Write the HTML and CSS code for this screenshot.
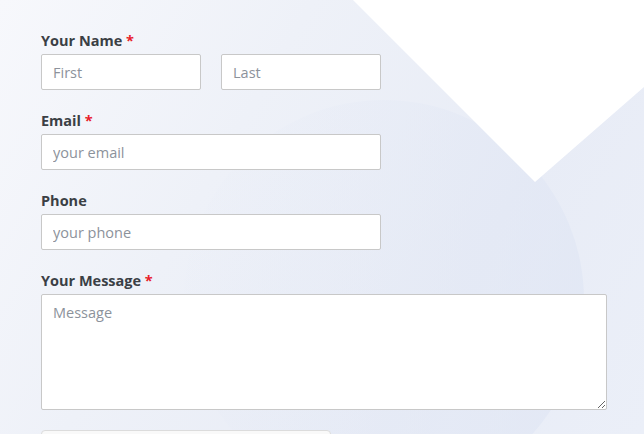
FILE: index.html
```html
<!DOCTYPE html>
<html lang="en">
<head>
<meta charset="utf-8">
<title>Contact form</title>
<link rel="stylesheet" href="styles.css">
</head>
<body>
<div class="page">
  <div class="deco-circle"></div>
  <svg class="deco-v" width="644" height="200" viewBox="0 0 644 200"><polygon points="353,0 644,0 644,87 535,182" fill="#ffffff"/></svg>
  <form class="form">
    <div class="field">
      <label class="label">Your Name <span class="req">*</span></label>
      <div class="name-row">
        <input class="input short" type="text" placeholder="First">
        <input class="input short" type="text" placeholder="Last">
      </div>
    </div>
    <div class="field">
      <label class="label">Email <span class="req">*</span></label>
      <input class="input wide" type="email" placeholder="your email">
    </div>
    <div class="field">
      <label class="label">Phone</label>
      <input class="input wide" type="tel" placeholder="your phone">
    </div>
    <div class="field">
      <label class="label">Your Message <span class="req">*</span></label>
      <textarea class="input area" placeholder="Message"></textarea>
    </div>
    <div class="captcha"></div>
  </form>
</div>
</body>
</html>
```
FILE: styles.css
```css
html, body {
  margin: 0;
  padding: 0;
}
body {
  width: 644px;
  height: 434px;
  overflow: hidden;
  font-family: "Open Sans", "Noto Sans", sans-serif;
}
.page {
  position: relative;
  width: 644px;
  height: 434px;
  overflow: hidden;
  background: linear-gradient(120deg, #f7f8fc 0%, #eef1f8 35%, #e8ecf6 70%, #ebeff8 100%);
}
.deco-circle {
  position: absolute;
  left: 184px;
  top: 100px;
  width: 400px;
  height: 400px;
  border-radius: 50%;
  background: linear-gradient(100deg, rgba(226,232,245,0) 0%, rgba(226,232,245,0.3) 45%, rgba(224,230,244,0.8) 100%);
}
.deco-v {
  position: absolute;
  left: 0;
  top: 0;
}
.form {
  position: relative;
  padding: 31px 0 0 41px;
  display: flex;
  flex-direction: column;
  gap: 21px;
}
.field {
  display: flex;
  flex-direction: column;
  gap: 3px;
}
.label {
  font-size: 14.5px;
  font-weight: 700;
  line-height: 20px;
  color: #3b3f45;
}
.req {
  color: #e8202a;
}
.name-row {
  display: flex;
  gap: 20px;
}
.input {
  box-sizing: border-box;
  height: 36px;
  border: 1px solid #c8c8c8;
  border-radius: 2px;
  background: #ffffff;
  padding: 0 11px;
  font-family: "Open Sans", "Noto Sans", sans-serif;
  font-size: 14.5px;
  color: #333;
  margin: 0;
  outline: none;
}
.input::placeholder {
  color: #8c929b;
}
.short {
  width: 160px;
}
.wide {
  width: 340px;
}
.area {
  width: 566px;
  height: 116px;
  padding: 8px 11px;
  resize: both;
  display: block;
}
.captcha {
  margin-top: -1px;
  width: 290px;
  height: 40px;
  box-sizing: border-box;
  border: 1px solid #dcdcdc;
  border-radius: 4px;
  background: #f9f9f9;
}
```
